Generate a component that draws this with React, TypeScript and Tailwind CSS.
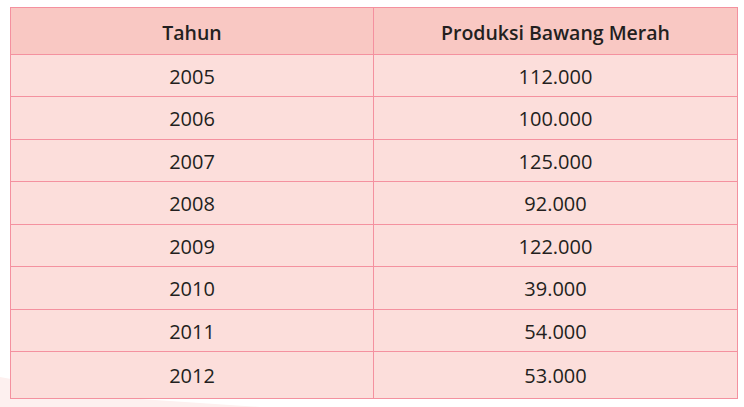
import React from "react";

const rows: [string, string][] = [
  ["2005", "112.000"],
  ["2006", "100.000"],
  ["2007", "125.000"],
  ["2008", "92.000"],
  ["2009", "122.000"],
  ["2010", "39.000"],
  ["2011", "54.000"],
  ["2012", "53.000"],
];

const heights = ["h-[42px]", "h-[43px]", "h-[42px]", "h-[43px]", "h-[42px]", "h-[43px]", "h-[42px]", "h-[46px]"];

export default function App() {
  return (
    <div
      className="relative w-[744px] h-[407px] bg-white overflow-hidden text-[#231f20]"
      style={{ fontFamily: '"Open Sans", "Noto Sans", sans-serif' }}
    >
      <svg className="absolute left-0 bottom-0" width="260" height="40" viewBox="0 0 260 40">
        <path d="M0 10 L110 30 L260 40 L0 40 Z" fill="#fdf0ef" />
      </svg>
      <div className="relative ml-[10px] mt-[7px] w-[728px] border border-[#f4919f] bg-[#fcdedb]">
        <div className="flex h-[47px] border-b border-[#f4919f] bg-[#f9c8c3] text-[19.5px] font-semibold pt-[4px]">
          <div className="w-[363px] -mt-[4px] pt-[4px] border-r border-[#f4919f] flex items-center justify-center">Tahun</div>
          <div className="flex-1 flex items-center justify-center">Produksi Bawang Merah</div>
        </div>
        {rows.map(([y, v], i) => (
          <div
            key={y}
            className={`flex ${heights[i]} ${i < rows.length - 1 ? "border-b border-[#f4919f]" : ""} text-[20px]`}
          >
            <div className="w-[363px] border-r border-[#f4919f] flex items-center justify-center pt-[2px]">{y}</div>
            <div className="flex-1 flex items-center justify-center pt-[2px]">{v}</div>
          </div>
        ))}
      </div>
    </div>
  );
}
